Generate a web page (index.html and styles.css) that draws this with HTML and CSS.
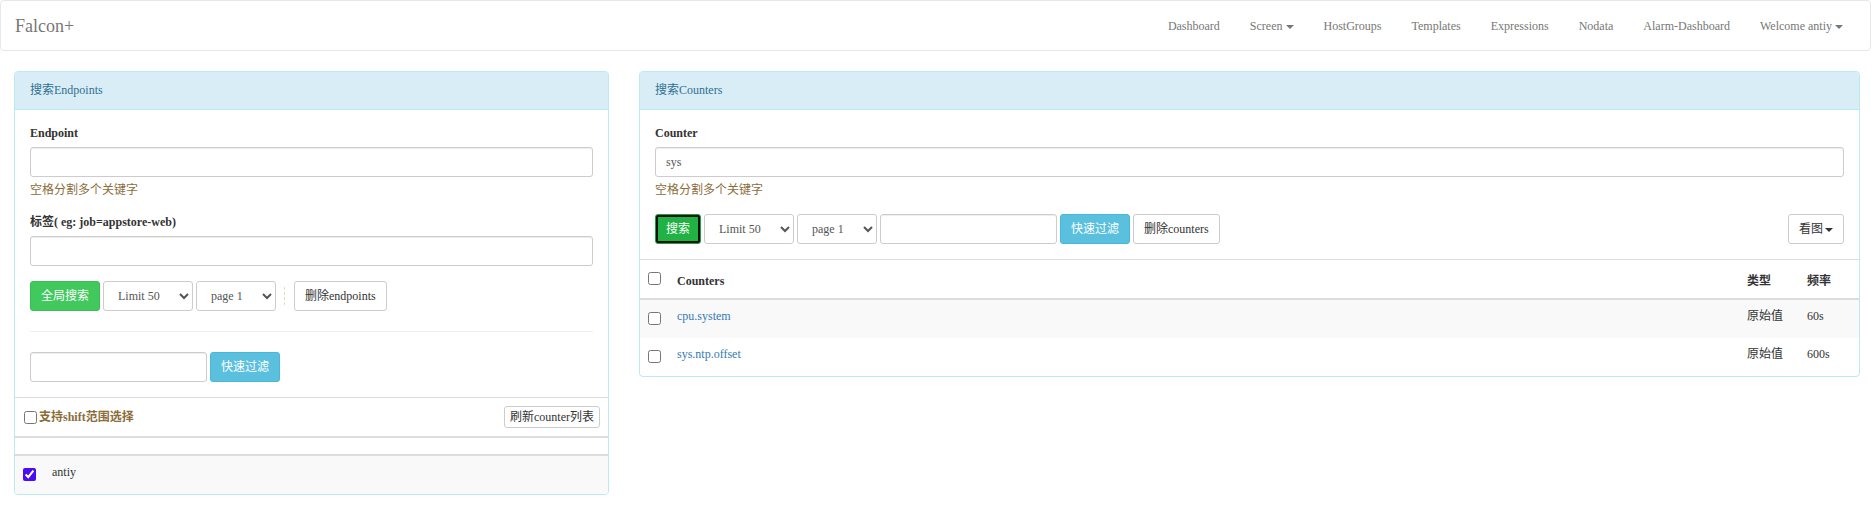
FILE: index.html
```html
<!DOCTYPE html>
<html lang="zh">
<head>
<meta charset="utf-8">
<title>Falcon+</title>
<link rel="stylesheet" href="styles.css">
</head>
<body>
<nav class="navbar">
  <a class="brand" href="#">Falcon+</a>
  <ul class="nav">
    <li><a href="#">Dashboard</a></li>
    <li><a href="#">Screen<span class="caret"></span></a></li>
    <li><a href="#">HostGroups</a></li>
    <li><a href="#">Templates</a></li>
    <li><a href="#">Expressions</a></li>
    <li><a href="#">Nodata</a></li>
    <li><a href="#">Alarm-Dashboard</a></li>
    <li><a href="#">Welcome antiy<span class="caret"></span></a></li>
  </ul>
</nav>

<div class="main">
  <div class="panel">
    <div class="panel-heading">搜索Endpoints</div>
    <div class="panel-body">
      <div class="form-group">
        <label class="control-label">Endpoint</label>
        <input class="form-control" type="text">
        <span class="help">空格分割多个关键字</span>
      </div>
      <div class="form-group">
        <label class="control-label">标签( eg: job=appstore-web)</label>
        <input class="form-control" type="text">
      </div>
      <div class="toolbar">
        <button class="btn btn-success">全局搜索</button>
        <select class="sel sel-limit"><option>Limit 50</option></select>
        <select class="sel sel-page"><option>page 1</option></select>
        <span class="sep"></span>
        <button class="btn btn-default">删除endpoints</button>
      </div>
      <hr class="divider">
      <div class="toolbar">
        <input class="form-control filter" type="text">
        <button class="btn btn-info">快速过滤</button>
      </div>
    </div>
    <table class="table">
      <thead>
        <tr>
          <th>
            <div class="shift-row">
              <label class="shift"><input type="checkbox"> 支持shift范围选择</label>
              <button class="btn btn-xs">刷新counter列表</button>
            </div>
          </th>
        </tr>
      </thead>
    </table>
    <table class="table table-plain striped">
      <thead><tr><th class="empty-th" colspan="2"></th></tr></thead>
      <tbody>
        <tr class="row38">
          <td class="chk"><input type="checkbox" checked></td>
          <td>antiy</td>
        </tr>
      </tbody>
    </table>
  </div>

  <div class="panel">
    <div class="panel-heading">搜索Counters</div>
    <div class="panel-body">
      <div class="form-group">
        <label class="control-label">Counter</label>
        <input class="form-control" type="text" value="sys">
        <span class="help">空格分割多个关键字</span>
      </div>
      <div class="toolbar">
        <button class="btn btn-success btn-focus">搜索</button>
        <select class="sel sel-limit"><option>Limit 50</option></select>
        <select class="sel sel-page"><option>page 1</option></select>
        <input class="form-control filter" type="text">
        <button class="btn btn-info">快速过滤</button>
        <button class="btn btn-default">删除counters</button>
        <button class="btn btn-default view">看图<span class="caret dark"></span></button>
      </div>
    </div>
    <table class="table striped counters">
      <thead>
        <tr class="row38">
          <th class="chk"><input type="checkbox"></th>
          <th>Counters</th>
          <th class="col-type">类型</th>
          <th class="col-freq">频率</th>
        </tr>
      </thead>
      <tbody>
        <tr class="row38">
          <td class="chk"><input type="checkbox"></td>
          <td><a href="#">cpu.system</a></td>
          <td>原始值</td>
          <td>60s</td>
        </tr>
        <tr class="row38">
          <td class="chk"><input type="checkbox"></td>
          <td><a href="#">sys.ntp.offset</a></td>
          <td>原始值</td>
          <td>600s</td>
        </tr>
      </tbody>
    </table>
  </div>
</div>
</body>
</html>
```
FILE: styles.css
```css
* { box-sizing: border-box; }
html, body { margin: 0; padding: 0; }
body {
  font-family: "Liberation Serif", "Noto Sans CJK SC", serif;
  font-size: 12px;
  line-height: 1.42857;
  color: #333;
  background: #fff;
}

/* navbar */
.navbar {
  display: flex;
  align-items: center;
  height: 51px;
  border: 1px solid #e7e7e7;
  border-radius: 4px;
  background: #fff;
  margin-bottom: 20px;
  padding: 0 12px 0 14px;
}
.brand {
  font-size: 18px;
  line-height: 20px;
  color: #777;
  text-decoration: none;
}
.nav {
  display: flex;
  list-style: none;
  margin: 0 0 0 auto;
  padding: 0;
}
.nav a {
  display: block;
  padding: 14px 15px;
  line-height: 20px;
  color: #777;
  text-decoration: none;
}
.nav .caret { margin-left: 3px; }
.caret {
  display: inline-block;
  width: 0;
  height: 0;
  margin-left: 2px;
  vertical-align: middle;
  border-top: 4px solid #777;
  border-left: 4px solid transparent;
  border-right: 4px solid transparent;
}
.caret.dark { border-top-color: #333; }

/* layout */
.main {
  display: grid;
  grid-template-columns: 595px 1221px;
  column-gap: 30px;
  padding-left: 14px;
  align-items: start;
}

/* panel */
.panel {
  border: 1px solid #bce8f1;
  border-radius: 4px;
  background: #fff;
  overflow: hidden;
}
.panel-heading {
  background: #d9edf7;
  color: #31708f;
  border-bottom: 1px solid #bce8f1;
  padding: 10px 15px;
  line-height: 17px;
}
.panel-body { padding: 15px; }

.form-group { margin-bottom: 15px; }
.control-label {
  display: block;
  font-weight: bold;
  line-height: 17px;
  margin-bottom: 5px;
}
.form-control {
  display: block;
  width: 100%;
  height: 30px;
  padding: 5px 10px;
  border: 1px solid #ccc;
  border-radius: 3px;
  font: inherit;
  color: #555;
  background: #fff;
  box-shadow: inset 0 1px 1px rgba(0,0,0,.075);
}
.help {
  display: block;
  margin-top: 5px;
  line-height: 17px;
  color: #8a6d3b;
}

.toolbar {
  display: flex;
  align-items: center;
  gap: 3px;
}
.toolbar .filter { width: 177px; flex: none; }

.btn {
  height: 30px;
  padding: 5px 10px;
  font: inherit;
  line-height: 18px;
  border: 1px solid transparent;
  border-radius: 3px;
  white-space: nowrap;
  cursor: pointer;
  background: #fff;
  color: #333;
}
.btn-default { border-color: #ccc; }
.btn-success { background: #41c95d; border-color: #39bd54; color: #fff; }
.btn-info { background: #5bc0de; border-color: #46b8da; color: #fff; }
.btn-focus {
  background: #20b243;
  border-color: #1aa13a;
  outline: 2px solid #111;
  outline-offset: -3px;
}
.btn-xs {
  height: 22px;
  padding: 1px 5px;
  line-height: 18px;
  border-color: #ccc;
  font-weight: normal;
  color: #333;
}
.view { margin-left: auto; }

.sel {
  height: 30px;
  padding: 0 6px 0 10px;
  border: 1px solid #ccc;
  border-radius: 3px;
  background: #fff;
  color: #555;
  font: inherit;
}
.sel-limit { width: 90px; }
.sel-page { width: 80px; }

.sep {
  width: 0;
  height: 18px;
  border-left: 1px dashed #e2dccb;
  margin: 0 6px 0 5px;
}

.divider {
  border: 0;
  border-top: 1px solid #eee;
  margin: 20px 0;
}

/* tables */
.table {
  width: 100%;
  border-collapse: collapse;
  border-top: 1px solid #ddd;
}
.table-plain { border-top: 0; }
.table th, .table td {
  padding: 8px;
  line-height: 17px;
  text-align: left;
}
.table thead th {
  border-bottom: 2px solid #ddd;
  vertical-align: bottom;
  font-weight: bold;
}
.table tbody td { vertical-align: top; }
.table .empty-th { padding: 8px; height: 16px; }
.striped tbody tr:nth-child(odd) { background: #f9f9f9; }
.row38 { height: 38px; }
.chk { width: 29px; }
.col-type, .col-freq { width: 60px; }

input[type="checkbox"] {
  width: 13px;
  height: 13px;
  margin: 4px 0 0;
  accent-color: #4a0cf2;
}

.shift-row {
  display: flex;
  justify-content: space-between;
  align-items: center;
  height: 22px;
}
.shift {
  display: flex;
  align-items: center;
  color: #8a6d3b;
  font-weight: bold;
}
.shift input[type="checkbox"] { margin: 0 2px 0 1px; }

a { color: #337ab7; text-decoration: none; }
```
